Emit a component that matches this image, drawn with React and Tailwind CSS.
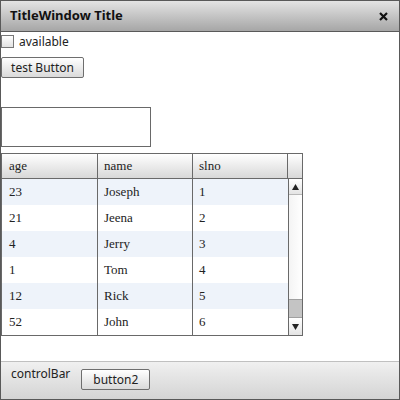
import React from 'react';

const rows = [
  { age: '23', name: 'Joseph', slno: '1' },
  { age: '21', name: 'Jeena', slno: '2' },
  { age: '4', name: 'Jerry', slno: '3' },
  { age: '1', name: 'Tom', slno: '4' },
  { age: '12', name: 'Rick', slno: '5' },
  { age: '52', name: 'John', slno: '6' },
];

const sans = "font-['Noto_Sans','Open_Sans',sans-serif]";
const serif = "font-['Liberation_Serif',serif]";

const ArrowUp = () => (
  <svg width="7" height="6" viewBox="0 0 7 6"><path d="M3.5 0 L7 6 L0 6 Z" fill="#222" /></svg>
);
const ArrowDown = () => (
  <svg width="7" height="6" viewBox="0 0 7 6"><path d="M0 0 L7 0 L3.5 6 Z" fill="#222" /></svg>
);

const Grid = () => (
  <div className="w-[302px] h-[183px] border border-[#696969] bg-white flex flex-col">
    <div className={`flex h-[26px] border-b border-[#696969] bg-gradient-to-b from-white to-[#d8d8d8] text-[13px] text-[#222] ${serif}`}>
      <div className="w-[96px] border-r border-[#696969] flex items-center pl-[7px]">age</div>
      <div className="w-[95px] border-r border-[#696969] flex items-center pl-[6px]">name</div>
      <div className="w-[95px] border-r border-[#696969] flex items-center pl-[6px]">slno</div>
      <div className="flex-1" />
    </div>
    <div className="flex flex-1">
      <div className={`flex flex-col w-[286px] text-[13px] text-[#222] ${serif}`}>
        {rows.map((r, i) => (
          <div key={i} className={`flex h-[26px] ${i % 2 === 0 ? 'bg-[#eef3fa]' : 'bg-white'}`}>
            <div className="w-[96px] border-r border-[#696969] flex items-center pl-[7px]">{r.age}</div>
            <div className="w-[95px] border-r border-[#696969] flex items-center pl-[6px]">{r.name}</div>
            <div className="w-[95px] flex items-center pl-[6px]">{r.slno}</div>
          </div>
        ))}
      </div>
      <div className="w-[14px] border-l border-[#696969] flex flex-col">
        <div className="h-[16px] border-b border-[#b8b8b8] bg-gradient-to-b from-white to-[#e4e4e4] flex items-center justify-center"><ArrowUp /></div>
        <div className="flex-1 bg-gradient-to-r from-[#f4f4f4] to-white" />
        <div className="h-[19px] bg-[#c4c4c4] border-y border-[#a0a0a0]" />
        <div className="h-[17px] bg-gradient-to-b from-white to-[#e4e4e4] flex items-center justify-center"><ArrowDown /></div>
      </div>
    </div>
  </div>
);

export default function App() {
  return (
    <div className={`w-[400px] h-[400px] border border-[#595959] bg-white flex flex-col ${sans}`}>
      <div className="h-[31px] shrink-0 border-b border-[#595959] bg-gradient-to-b from-[#e4e4e4] to-[#a6a6a6] flex items-center justify-between pl-[9px] pr-[11px]">
        <span className="text-[13px] font-bold text-[#111]">TitleWindow Title</span>
        <svg width="9" height="9" viewBox="0 0 9 9"><path d="M1 1 L8 8 M8 1 L1 8" stroke="#111" strokeWidth="2.2" /></svg>
      </div>
      <div className="flex-1 flex flex-col items-start">
        <label className="flex items-center gap-[5px] mt-[3px] h-[13px] text-[12px] text-[#222]">
          <span className="w-[13px] h-[13px] border border-[#777] bg-gradient-to-b from-white to-[#e2e2e2]" />
          available
        </label>
        <button className="mt-[9px] w-[83px] h-[21px] border border-[#6e6e6e] rounded-[2px] bg-gradient-to-b from-white to-[#dadada] text-[12px] text-[#222] leading-none">test Button</button>
        <div className="mt-[29px] w-[150px] h-[40px] border border-[#696969] bg-white" />
        <div className="mt-[6px]">
          <Grid />
        </div>
      </div>
      <div className="h-[38px] shrink-0 border-t border-[#c0c0c0] bg-gradient-to-b from-[#f0f0f0] to-[#d4d4d4] flex items-start gap-[11px] pl-[10px] pt-[4px]">
        <span className="text-[12px] text-[#222] leading-[16px]">controlBar</span>
        <button className="mt-[3px] w-[69px] h-[21px] border border-[#6e6e6e] rounded-[2px] bg-gradient-to-b from-white to-[#dadada] text-[12px] text-[#222] leading-none">button2</button>
      </div>
    </div>
  );
}
